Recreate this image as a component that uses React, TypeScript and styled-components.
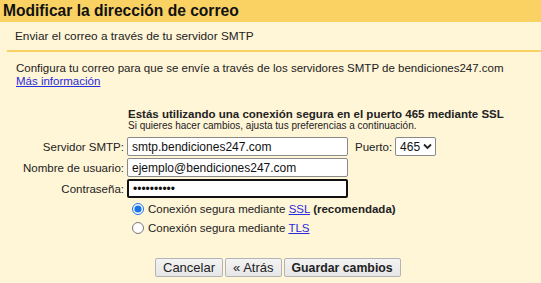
import styled, { createGlobalStyle } from "styled-components";

const GlobalStyle = createGlobalStyle`
  html, body {
    margin: 0;
    padding: 0;
    background: #fff5d7;
  }
  body {
    font-family: "Liberation Sans", Arial, sans-serif;
    color: #222;
  }
`;

const Page = styled.div`
  width: 541px;
  height: 283px;
  overflow: hidden;
  background: #fff5d7;
  font-size: 11.5px;
`;

const TitleBar = styled.div`
  height: 22px;
  background: #fad163;
  padding-left: 3px;
  font-size: 15.6px;
  font-weight: bold;
  line-height: 22px;
  color: #111;
`;

const SubTitle = styled.div`
  height: 28px;
  padding-left: 15px;
  line-height: 28px;
  font-size: 11.8px;
  color: #222;
`;

const Divider = styled.div`
  height: 2px;
  margin-left: 7px;
  background: #fad163;
`;

const Intro = styled.div`
  padding: 10px 0 0 16px;
  line-height: 13px;
`;

const Link = styled.a`
  color: #2a2ae0;
  text-decoration: underline;
  cursor: pointer;
`;

const Notice = styled.div`
  margin: 20px 0 0 128px;
  line-height: 12px;

  strong {
    font-size: 11.5px;
  }

  small {
    display: block;
    font-size: 10px;
  }
`;

const Form = styled.div`
  display: grid;
  grid-template-columns: 124px auto;
  column-gap: 3px;
  row-gap: 2px;
  margin-top: 5px;
  align-items: center;
`;

const Label = styled.label`
  text-align: right;
  white-space: nowrap;
`;

const FieldRow = styled.div`
  display: flex;
  align-items: center;
  gap: 7px;
`;

const TextInput = styled.input<{ $focused?: boolean }>`
  box-sizing: border-box;
  width: 221px;
  height: 19px;
  margin: 0;
  padding: 0 4px;
  background: #fff;
  border: ${(p) => (p.$focused ? "2px solid #111" : "1px solid #8a8a8a")};
  border-radius: 2px;
  font-family: "Liberation Sans", Arial, sans-serif;
  font-size: 12px;
  color: #111;
  outline: none;
`;

const PortLabel = styled.span`
  display: flex;
  align-items: center;
  gap: 3px;
`;

const SelectWrap = styled.span`
  position: relative;
  display: inline-flex;

  svg {
    position: absolute;
    right: 4px;
    top: 6px;
    pointer-events: none;
  }
`;

const Select = styled.select`
  appearance: none;
  box-sizing: border-box;
  height: 19px;
  width: 41px;
  margin: 0;
  padding: 0 0 0 4px;
  border: 1px solid #8a8a8a;
  border-radius: 2px;
  background: #fff;
  font-family: "Liberation Sans", Arial, sans-serif;
  font-size: 12px;
  color: #111;
  outline: none;
`;

const Options = styled.div`
  display: flex;
  flex-direction: column;
  gap: 5px;
  margin: 4px 0 0 132px;
`;

const RadioLabel = styled.label`
  display: flex;
  align-items: center;
  gap: 4px;
  line-height: 14px;

  input {
    margin: 0;
    width: 12px;
    height: 12px;
    accent-color: #1a73e8;
  }
`;

const Actions = styled.div`
  display: flex;
  gap: 7px;
  margin: 23px 0 0 155px;
`;

const Button = styled.button<{ $primary?: boolean }>`
  height: 19px;
  padding: 0 7px;
  background: linear-gradient(#f3f3f3, #e6e6e6);
  border: 1px solid #b4b4b4;
  border-radius: 2px;
  font-family: "Liberation Sans", Arial, sans-serif;
  font-size: ${(p) => (p.$primary ? "12.3px" : "13px")};
  font-weight: ${(p) => (p.$primary ? "bold" : "normal")};
  color: #222;
  cursor: pointer;

  & + & {
    margin-left: ${(p) => (p.$primary ? "-5px" : "0")};
  }
`;

export default function App() {
  return (
    <Page>
      <GlobalStyle />
      <TitleBar>Modificar la dirección de correo</TitleBar>
      <SubTitle>Enviar el correo a través de tu servidor SMTP</SubTitle>
      <Divider />
      <Intro>
        Configura tu correo para que se envíe a través de los servidores SMTP de
        bendiciones247.com
        <br />
        <Link>Más información</Link>
      </Intro>
      <Notice>
        <strong>Estás utilizando una conexión segura en el puerto 465 mediante SSL</strong>
        <small>Si quieres hacer cambios, ajusta tus preferencias a continuación.</small>
      </Notice>
      <Form>
        <Label>Servidor SMTP:</Label>
        <FieldRow>
          <TextInput defaultValue="smtp.bendiciones247.com" />
          <PortLabel>
            Puerto:
            <SelectWrap>
              <Select defaultValue="465">
                <option>465</option>
                <option>587</option>
              </Select>
              <svg width="9" height="7" viewBox="0 0 9 7">
                <path d="M1 1.5 L4.5 5 L8 1.5" fill="none" stroke="#222" strokeWidth="1.8" />
              </svg>
            </SelectWrap>
          </PortLabel>
        </FieldRow>
        <Label>Nombre de usuario:</Label>
        <FieldRow>
          <TextInput defaultValue="ejemplo@bendiciones247.com" />
        </FieldRow>
        <Label>Contraseña:</Label>
        <FieldRow>
          <TextInput $focused type="password" defaultValue="••••••••••" />
        </FieldRow>
      </Form>
      <Options>
        <RadioLabel>
          <input type="radio" name="sec" defaultChecked />
          <span>
            Conexión segura mediante <Link>SSL</Link> <b>(recomendada)</b>
          </span>
        </RadioLabel>
        <RadioLabel>
          <input type="radio" name="sec" />
          <span>
            Conexión segura mediante <Link>TLS</Link>
          </span>
        </RadioLabel>
      </Options>
      <Actions>
        <Button>Cancelar</Button>
        <Button>« Atrás</Button>
        <Button $primary>Guardar cambios</Button>
      </Actions>
    </Page>
  );
}
